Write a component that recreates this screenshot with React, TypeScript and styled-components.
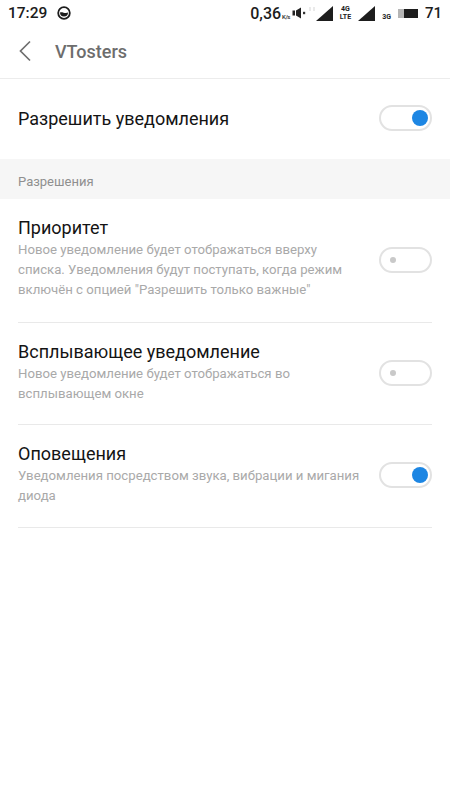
import { createGlobalStyle, styled } from "styled-components";

const GlobalStyle = createGlobalStyle`
    html, body {
        margin: 0;
        padding: 0;
        background: #ffffff;
    }
    body {
        font-family: Roboto, "Noto Sans", sans-serif;
    }
`;

function MinutesIcon() {
    return (
        <svg width="14" height="14" viewBox="0 0 14 14">
            <circle cx="7" cy="7" r="5.8" fill="none" stroke="#1c1c1c" strokeWidth="1.8" />
            <path d="M3 6.6 C5 5.4 8 8 11 6.6 A4 4 0 0 1 3 6.6 Z" fill="#1c1c1c" />
        </svg>
    );
}

function SpeakerIcon() {
    return (
        <svg width="14" height="12" viewBox="0 0 14 12">
            <path d="M0.5 3.5h2.5v5H0.5z M4 3.5l5-3v11l-5-3z" fill="#222" />
            <rect x="11" y="4.8" width="2.2" height="2.4" fill="#333" />
        </svg>
    );
}

function DataDots() {
    return (
        <svg width="6" height="15" viewBox="0 0 6 15">
            <path d="M1 1v4M5 1v4" stroke="#e2e2e2" strokeWidth="1.4" fill="none" />
        </svg>
    );
}

function SignalIcon() {
    return (
        <svg width="17" height="15" viewBox="0 0 17 15">
            <path d="M0 15L17 0V15Z" fill="#1d1d1d" />
        </svg>
    );
}

function BatteryIcon() {
    return (
        <svg width="20" height="9" viewBox="0 0 20 9">
            <rect x="0" y="0" width="6" height="9" fill="#b5b5b5" />
            <rect x="6" y="0" width="14" height="9" fill="#1d1d1d" />
        </svg>
    );
}

function Status() {
    return (
        <StatusBar>
            <StatusGroup>
                <Clock>17:29</Clock>
                <MinutesIcon />
            </StatusGroup>
            <StatusGroup>
                <Speed>0,36<small>K/s</small></Speed>
                <SpeakerIcon />
                <DataSlot><DataDots /></DataSlot>
                <SignalIcon />
                <NetLabel>4G<br />LTE</NetLabel>
                <SignalIcon />
                <NetLabel $low>3G</NetLabel>
                <BatteryIcon />
                <Level>71</Level>
            </StatusGroup>
        </StatusBar>
    );
}

function Switch({ on }: { on?: boolean }) {
    return (
        <SwitchTrack $on={on}>
            <SwitchKnob $on={on} />
        </SwitchTrack>
    );
}

export default function App() {
    return (
        <Screen>
            <GlobalStyle />
            <Status />
            <Header>
                <svg width="14" height="22" viewBox="0 0 14 22">
                    <path d="M12 1.5L2.5 11 12 20.5" fill="none" stroke="#6f6f6f" strokeWidth="1.7" />
                </svg>
                <HeaderTitle>VTosters</HeaderTitle>
            </Header>

            <TopRow>
                <RowTitle>Разрешить уведомления</RowTitle>
                <Switch on />
            </TopRow>

            <SectionHead>Разрешения</SectionHead>

            <List>
                <Row $height={124}>
                    <RowText>
                        <RowTitle>Приоритет</RowTitle>
                        <RowHint>
                            Новое уведомление будет отображаться вверху<br />
                            списка. Уведомления будут поступать, когда режим<br />
                            включён с опцией "Разрешить только важные"
                        </RowHint>
                    </RowText>
                    <Switch />
                </Row>
                <Row $height={102}>
                    <RowText>
                        <RowTitle>Всплывающее уведомление</RowTitle>
                        <RowHint>
                            Новое уведомление будет отображаться во<br />
                            всплывающем окне
                        </RowHint>
                    </RowText>
                    <Switch />
                </Row>
                <Row $height={103}>
                    <RowText>
                        <RowTitle>Оповещения</RowTitle>
                        <RowHint>
                            Уведомления посредством звука, вибрации и мигания<br />
                            диода
                        </RowHint>
                    </RowText>
                    <Switch on />
                </Row>
            </List>
        </Screen>
    );
}

const Screen = styled.div`
    width: 450px;
    height: 800px;
    overflow: hidden;
    background: #ffffff;
    display: flex;
    flex-direction: column;
`;

const StatusBar = styled.div`
    height: 27px;
    padding: 0 8px 1px 8px;
    box-sizing: border-box;
    display: flex;
    align-items: center;
    justify-content: space-between;
    color: #1c1c1c;
`;

const StatusGroup = styled.div`
    display: flex;
    align-items: center;
    gap: 7px;
`;

const Clock = styled.span`
    font-size: 15.5px;
    font-weight: 500;
    margin-right: 3px;
`;

const Speed = styled.span`
    font-size: 16px;
    font-weight: 500;
    margin-right: -5px;

    small {
        font-size: 6px;
        letter-spacing: -0.5px;
        margin-left: 1px;
    }
`;

const DataSlot = styled.span`
    display: flex;
    margin: 0 -6px 0 -4px;
`;

const NetLabel = styled.span<{ $low?: boolean }>`
    font-size: 7px;
    font-weight: 700;
    line-height: 8px;
    text-align: center;
    padding-top: ${(p) => (p.$low ? "7px" : "0")};
`;

const Level = styled.span`
    font-size: 15px;
    font-weight: 500;
`;

const Header = styled.div`
    height: 52px;
    padding: 0 0 3px 18px;
    box-sizing: border-box;
    display: flex;
    align-items: center;
    gap: 23px;
    border-bottom: 1px solid #ececec;
`;

const HeaderTitle = styled.div`
    font-size: 18px;
    font-weight: 500;
    color: #6d6d6d;
`;

const TopRow = styled.div`
    height: 80px;
    padding: 0 18px;
    display: flex;
    align-items: center;
    justify-content: space-between;
`;

const SectionHead = styled.div`
    height: 40px;
    padding: 5px 18px 0;
    box-sizing: border-box;
    display: flex;
    align-items: center;
    background: #f6f6f6;
    color: #8f8f8f;
    font-size: 13px;
`;

const List = styled.div`
    padding: 0 18px;
`;

const Row = styled.div<{ $height: number }>`
    height: ${(p) => p.$height}px;
    box-sizing: border-box;
    display: flex;
    align-items: center;
    justify-content: space-between;
    border-bottom: 1px solid #e9e9e9;
`;

const RowText = styled.div`
    align-self: flex-start;
    padding-top: 17px;
    display: flex;
    flex-direction: column;
`;

const RowTitle = styled.div`
    font-size: 18px;
    color: #141414;
    line-height: 24px;
`;

const RowHint = styled.div`
    font-size: 13.2px;
    color: #a9a9a9;
    line-height: 20px;
    white-space: nowrap;
`;

const SwitchTrack = styled.div<{ $on?: boolean }>`
    width: 53px;
    height: 26px;
    margin-bottom: 2px;
    box-sizing: border-box;
    flex: none;
    border: 2px solid #e2e2e2;
    border-radius: 13px;
    display: flex;
    align-items: center;
    justify-content: ${(p) => (p.$on ? "flex-end" : "flex-start")};
    padding: 0 ${(p) => (p.$on ? "2px" : "9px")};
`;

const SwitchKnob = styled.div<{ $on?: boolean }>`
    width: ${(p) => (p.$on ? "16px" : "6px")};
    height: ${(p) => (p.$on ? "16px" : "6px")};
    border-radius: 50%;
    background: ${(p) => (p.$on ? "#1d86e3" : "#c9c9c9")};
`;
